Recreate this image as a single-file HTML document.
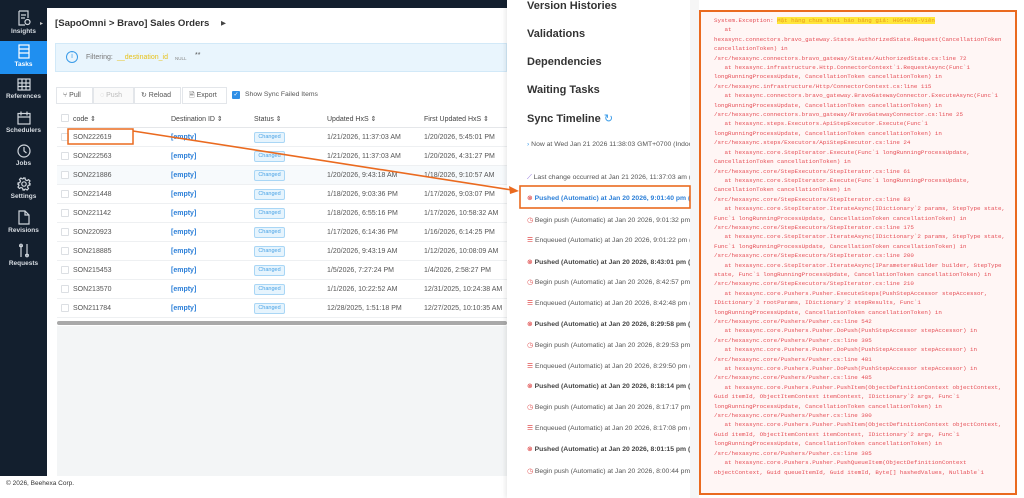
<!DOCTYPE html>
<html><head><meta charset="utf-8"><style>
*{margin:0;padding:0;box-sizing:border-box}
body{width:1024px;height:498px;overflow:hidden;position:relative;background:#fff;font-family:"Liberation Sans","DejaVu Sans",sans-serif;color:#333}
.abs{position:absolute}
#side{left:0;top:0;width:47px;height:476px;background:#131f2e}
.si{position:absolute;left:0;width:47px;text-align:center;color:#d8dde3;font-size:6.5px;font-weight:bold}
.si svg{display:block;margin:0 auto 2px}
#top{left:47px;top:0;width:460px;height:8px;background:#131f2e}
.t{position:absolute;white-space:nowrap}
.row{position:absolute;left:57px;width:450px;height:19px;border-bottom:1px solid #eef0f2;font-size:7px;color:#555}
.row span{position:absolute;top:6px;white-space:nowrap}
.cb{position:absolute;left:4px;top:5px;width:8px;height:8px;border:1px solid #dcdfe3;border-radius:1px;background:#fff}
.badge{position:absolute;left:197px;top:4px;width:31px;height:11px;background:#e6f4fd;border:1px solid #a9d6f5;border-radius:2px;color:#4aa3e6;font-size:5.5px;text-align:center;line-height:9px}
.btn{position:absolute;top:87px;height:17px;border:1px solid #e3e6ea;background:#fff;font-size:7px;color:#555;line-height:15px;padding-left:6px}
.tl{position:absolute;left:527px;font-size:6.8px;color:#555;white-space:nowrap;width:163px;overflow:hidden}
.h{position:absolute;left:527px;font-size:11px;font-weight:bold;color:#333}
#err{left:699px;top:10px;width:318px;height:485px;border:2px solid #ea6a1f;background:#fff6f5;overflow:hidden;padding:4px 0 0 13px;font-family:"Liberation Mono",monospace;font-size:5.85px;line-height:9.4px;color:#e54d55;white-space:pre}
</style></head><body>
<div id="side" class="abs">
 <div class="abs" style="left:40px;top:20px;color:#ccc;font-size:6px">▸</div>
 <div class="si" style="top:10px"><svg width="14" height="16" viewBox="0 0 14 16" fill="none" stroke="#cfd5dc" stroke-width="1.2"><path d="M2 1h9v7M2 1v14h6M4 5h5M4 8h4"/><circle cx="10.5" cy="12" r="2.5"/></svg>Insights</div>
 <div class="abs" style="left:0;top:41px;width:47px;height:33px;background:#1f8ff0"></div>
 <div class="si" style="top:44px;color:#fff"><svg width="12" height="15" viewBox="0 0 12 15" fill="none" stroke="#fff" stroke-width="1.2"><rect x="1" y="1" width="10" height="13"/><path d="M1 5h10M1 9h10"/></svg>Tasks</div>
 <div class="si" style="top:78px"><svg width="14" height="13" viewBox="0 0 14 13" fill="none" stroke="#cfd5dc" stroke-width="1.2"><rect x="1" y="1" width="12" height="11"/><path d="M1 5h12M1 8.5h12M5 1v11M9 1v11"/></svg>References</div>
 <div class="si" style="top:111px"><svg width="14" height="14" viewBox="0 0 14 14" fill="none" stroke="#cfd5dc" stroke-width="1.2"><rect x="1" y="2.5" width="12" height="10.5"/><path d="M1 6h12M4 0.5v4M10 0.5v4"/></svg>Schedulers</div>
 <div class="si" style="top:144px"><svg width="14" height="14" viewBox="0 0 14 14" fill="none" stroke="#cfd5dc" stroke-width="1.2"><circle cx="7" cy="7" r="6"/><path d="M7 3v4l2.5 2"/></svg>Jobs</div>
 <div class="si" style="top:177px"><svg width="14" height="14" viewBox="0 0 14 14" fill="none" stroke="#cfd5dc" stroke-width="1.2"><circle cx="7" cy="7" r="2.2"/><path d="M6 1h2l.4 1.8 1.6.8 1.6-1 1.4 1.4-1 1.6.7 1.6L13 6v2l-1.8.4-.7 1.6 1 1.6-1.4 1.4-1.6-1-1.6.7L8 13H6l-.4-1.8-1.6-.7-1.6 1-1.4-1.4 1-1.6-.7-1.6L1 8V6l1.8-.4.7-1.6-1-1.6 1.4-1.4 1.6 1 1.6-.8z"/></svg>Settings</div>
 <div class="si" style="top:210px"><svg width="12" height="15" viewBox="0 0 12 15" fill="none" stroke="#cfd5dc" stroke-width="1.2"><path d="M1 1h6l4 4v9H1z M7 1v4h4"/></svg>Revisions</div>
 <div class="si" style="top:243px"><svg width="12" height="15" viewBox="0 0 12 15" fill="none" stroke="#cfd5dc" stroke-width="1.2"><path d="M3 3v11M9 1v11M1 3h4M7 12h4"/><circle cx="3" cy="2.5" r="1.3"/><circle cx="9" cy="12.5" r="1.3"/></svg>Requests</div>
</div>
<div id="top" class="abs"></div>
<div class="t" style="left:55px;top:18px;font-size:9.6px;font-weight:bold;color:#333">[SapoOmni &gt; Bravo] Sales Orders</div>
<div class="t" style="left:221px;top:19px;font-size:6.5px;color:#444">▶</div>
<div class="abs" style="left:55px;top:43px;width:452px;height:29px;background:#e9f5fd;border:1px solid #d2e9f8"></div>
<div class="abs" style="left:66px;top:51px;width:12px;height:12px;border:1.3px solid #3a9be8;border-radius:50%;color:#3a9be8;font-size:7px;text-align:center;line-height:10px">i</div>
<div class="t" style="left:86px;top:54px;font-size:7px;color:#777">Filtering:</div>
<div class="t" style="left:117px;top:54px;font-size:7px;color:#e8c21c">__destination_id</div>
<div class="t" style="left:175px;top:56px;font-size:4.5px;color:#888">NULL</div>
<div class="t" style="left:195px;top:52px;font-size:7px;color:#555">**</div>
<div class="btn" style="left:56px;width:37px">⑂ Pull</div>
<div class="btn" style="left:93px;width:41px;color:#bbb;background:#fafafa">◌ Push</div>
<div class="btn" style="left:134px;width:47px">↻ Reload</div>
<div class="btn" style="left:182px;width:45px">🗎 Export</div>
<div class="abs" style="left:232px;top:91px;width:8px;height:8px;background:#2f8fe6;border-radius:1px;color:#fff;font-size:6px;line-height:8px;text-align:center">✓</div>
<div class="t" style="left:245px;top:91px;font-size:6.8px;color:#555">Show Sync Failed Items</div>
<div class="row" style="top:109px;border-bottom:1px solid #e5e7ea;color:#444"><div class="cb"></div><span style="left:16px;top:6px">code ⇕</span><span style="left:114px">Destination ID ⇕</span><span style="left:197px">Status ⇕</span><span style="left:270px">Updated HxS ⇕</span><span style="left:367px">First Updated HxS ⇕</span></div>
<div class="row" style="top:128px"><div class="cb"></div><span style="left:16px">SON222619</span><span style="left:114px;color:#2b7fd8;font-weight:bold">[empty]</span><div class="badge">Changed</div><span style="left:270px">1/21/2026, 11:37:03 AM</span><span style="left:367px">1/20/2026, 5:45:01 PM</span></div>
<div class="row" style="top:147px"><div class="cb"></div><span style="left:16px">SON222563</span><span style="left:114px;color:#2b7fd8;font-weight:bold">[empty]</span><div class="badge">Changed</div><span style="left:270px">1/21/2026, 11:37:03 AM</span><span style="left:367px">1/20/2026, 4:31:27 PM</span></div>
<div class="row" style="top:166px;background:#f7fafc"><div class="cb"></div><span style="left:16px">SON221886</span><span style="left:114px;color:#2b7fd8;font-weight:bold">[empty]</span><div class="badge">Changed</div><span style="left:270px">1/20/2026, 9:43:18 AM</span><span style="left:367px">1/18/2026, 9:10:57 AM</span></div>
<div class="row" style="top:185px"><div class="cb"></div><span style="left:16px">SON221448</span><span style="left:114px;color:#2b7fd8;font-weight:bold">[empty]</span><div class="badge">Changed</div><span style="left:270px">1/18/2026, 9:03:36 PM</span><span style="left:367px">1/17/2026, 9:03:07 PM</span></div>
<div class="row" style="top:204px"><div class="cb"></div><span style="left:16px">SON221142</span><span style="left:114px;color:#2b7fd8;font-weight:bold">[empty]</span><div class="badge">Changed</div><span style="left:270px">1/18/2026, 6:55:16 PM</span><span style="left:367px">1/17/2026, 10:58:32 AM</span></div>
<div class="row" style="top:223px"><div class="cb"></div><span style="left:16px">SON220923</span><span style="left:114px;color:#2b7fd8;font-weight:bold">[empty]</span><div class="badge">Changed</div><span style="left:270px">1/17/2026, 6:14:36 PM</span><span style="left:367px">1/16/2026, 6:14:25 PM</span></div>
<div class="row" style="top:242px"><div class="cb"></div><span style="left:16px">SON218885</span><span style="left:114px;color:#2b7fd8;font-weight:bold">[empty]</span><div class="badge">Changed</div><span style="left:270px">1/20/2026, 9:43:19 AM</span><span style="left:367px">1/12/2026, 10:08:09 AM</span></div>
<div class="row" style="top:261px"><div class="cb"></div><span style="left:16px">SON215453</span><span style="left:114px;color:#2b7fd8;font-weight:bold">[empty]</span><div class="badge">Changed</div><span style="left:270px">1/5/2026, 7:27:24 PM</span><span style="left:367px">1/4/2026, 2:58:27 PM</span></div>
<div class="row" style="top:280px"><div class="cb"></div><span style="left:16px">SON213570</span><span style="left:114px;color:#2b7fd8;font-weight:bold">[empty]</span><div class="badge">Changed</div><span style="left:270px">1/1/2026, 10:22:52 AM</span><span style="left:367px">12/31/2025, 10:24:38 AM</span></div>
<div class="row" style="top:299px"><div class="cb"></div><span style="left:16px">SON211784</span><span style="left:114px;color:#2b7fd8;font-weight:bold">[empty]</span><div class="badge">Changed</div><span style="left:270px">12/28/2025, 1:51:18 PM</span><span style="left:367px">12/27/2025, 10:10:35 AM</span></div>
<div class="abs" style="left:57px;top:321px;width:450px;height:4px;background:#a9a9a9;border-radius:2px"></div>
<div class="abs" style="left:57px;top:326px;width:450px;height:150px;background:#f3f5f6"></div>
<div class="t" style="left:6px;top:480px;font-size:6.5px;color:#333">© 2026, Beehexa Corp.</div>
<div class="abs" style="left:507px;top:0;width:183px;height:498px;background:#fff;box-shadow:-2px 0 4px rgba(0,0,0,.08)"></div>
<div class="abs" style="left:690px;top:0;width:9px;height:498px;background:#f6f6f6"></div>
<div class="h" style="top:0px">Version Histories</div>
<div class="h" style="top:28px">Validations</div>
<div class="h" style="top:56px">Dependencies</div>
<div class="h" style="top:84px">Waiting Tasks</div>
<div class="h" style="top:112px">Sync Timeline <span style="color:#3a9be8;font-weight:normal">↻</span></div>
<div class="tl" style="top:141px"><span style="color:#3a9be8">›</span> Now at Wed Jan 21 2026 11:38:03 GMT+0700 (Indochina)</div>
<div class="tl" style="top:174px"><span style="color:#7a5ad8">⟋</span> Last change occurred at Jan 21 2026, 11:37:03 am (</div>
<div class="tl" style="top:194px;color:#2b7fd8;font-weight:bold"><span style="color:#e05050">⊗</span> Pushed (Automatic) at Jan 20 2026, 9:01:40 pm (1</div>
<div class="tl" style="top:216px"><span style="color:#e05050">◷</span> Begin push (Automatic) at Jan 20 2026, 9:01:32 pm</div>
<div class="tl" style="top:236px"><span style="color:#e05050">☰</span> Enqueued (Automatic) at Jan 20 2026, 9:01:22 pm (</div>
<div class="tl" style="top:258px;font-weight:bold;color:#444"><span style="color:#e05050">⊗</span> Pushed (Automatic) at Jan 20 2026, 8:43:01 pm (1</div>
<div class="tl" style="top:278px"><span style="color:#e05050">◷</span> Begin push (Automatic) at Jan 20 2026, 8:42:57 pm</div>
<div class="tl" style="top:299px"><span style="color:#e05050">☰</span> Enqueued (Automatic) at Jan 20 2026, 8:42:48 pm (</div>
<div class="tl" style="top:320px;font-weight:bold;color:#444"><span style="color:#e05050">⊗</span> Pushed (Automatic) at Jan 20 2026, 8:29:58 pm (1</div>
<div class="tl" style="top:341px"><span style="color:#e05050">◷</span> Begin push (Automatic) at Jan 20 2026, 8:29:53 pm</div>
<div class="tl" style="top:362px"><span style="color:#e05050">☰</span> Enqueued (Automatic) at Jan 20 2026, 8:29:50 pm (</div>
<div class="tl" style="top:382px;font-weight:bold;color:#444"><span style="color:#e05050">⊗</span> Pushed (Automatic) at Jan 20 2026, 8:18:14 pm (1</div>
<div class="tl" style="top:403px"><span style="color:#e05050">◷</span> Begin push (Automatic) at Jan 20 2026, 8:17:17 pm</div>
<div class="tl" style="top:424px"><span style="color:#e05050">☰</span> Enqueued (Automatic) at Jan 20 2026, 8:17:08 pm (</div>
<div class="tl" style="top:445px;font-weight:bold;color:#444"><span style="color:#e05050">⊗</span> Pushed (Automatic) at Jan 20 2026, 8:01:15 pm (1</div>
<div class="tl" style="top:467px"><span style="color:#e05050">◷</span> Begin push (Automatic) at Jan 20 2026, 8:00:44 pm</div>
<div id="err" class="abs">System.Exception: <span style="background:#ffe63b;color:#e89a1a">Mặt hàng chưa khai báo bảng giá: H054076-Viên</span>
   at
hexasync.connectors.bravo_gateway.States.AuthorizedState.Request(CancellationToken
cancellationToken) in
/src/hexasync.connectors.bravo_gateway/States/AuthorizedState.cs:line 72
   at hexasync.infrastructure.Http.ConnectorContext`1.RequestAsync(Func`1
longRunningProcessUpdate, CancellationToken cancellationToken) in
/src/hexasync.infrastructure/Http/ConnectorContext.cs:line 115
   at hexasync.connectors.bravo_gateway.BravoGatewayConnector.ExecuteAsync(Func`1
longRunningProcessUpdate, CancellationToken cancellationToken) in
/src/hexasync.connectors.bravo_gateway/BravoGatewayConnector.cs:line 25
   at hexasync.steps.Executors.ApiStepExecutor.Execute(Func`1
longRunningProcessUpdate, CancellationToken cancellationToken) in
/src/hexasync.steps/Executors/ApiStepExecutor.cs:line 24
   at hexasync.core.StepIterator.Execute(Func`1 longRunningProcessUpdate,
CancellationToken cancellationToken) in
/src/hexasync.core/StepExecutors/StepIterator.cs:line 61
   at hexasync.core.StepIterator.Execute(Func`1 longRunningProcessUpdate,
CancellationToken cancellationToken) in
/src/hexasync.core/StepExecutors/StepIterator.cs:line 83
   at hexasync.core.StepIterator.IterateAsync(IDictionary`2 params, StepType state,
Func`1 longRunningProcessUpdate, CancellationToken cancellationToken) in
/src/hexasync.core/StepExecutors/StepIterator.cs:line 175
   at hexasync.core.StepIterator.IterateAsync(IDictionary`2 params, StepType state,
Func`1 longRunningProcessUpdate, CancellationToken cancellationToken) in
/src/hexasync.core/StepExecutors/StepIterator.cs:line 200
   at hexasync.core.StepIterator.IterateAsync(IParametersBuilder builder, StepType
state, Func`1 longRunningProcessUpdate, CancellationToken cancellationToken) in
/src/hexasync.core/StepExecutors/StepIterator.cs:line 210
   at hexasync.core.Pushers.Pusher.ExecuteSteps(PushStepAccessor stepAccessor,
IDictionary`2 rootParams, IDictionary`2 stepResults, Func`1
longRunningProcessUpdate, CancellationToken cancellationToken) in
/src/hexasync.core/Pushers/Pusher.cs:line 542
   at hexasync.core.Pushers.Pusher.DoPush(PushStepAccessor stepAccessor) in
/src/hexasync.core/Pushers/Pusher.cs:line 395
   at hexasync.core.Pushers.Pusher.DoPush(PushStepAccessor stepAccessor) in
/src/hexasync.core/Pushers/Pusher.cs:line 481
   at hexasync.core.Pushers.Pusher.DoPush(PushStepAccessor stepAccessor) in
/src/hexasync.core/Pushers/Pusher.cs:line 485
   at hexasync.core.Pushers.Pusher.PushItem(ObjectDefinitionContext objectContext,
Guid itemId, ObjectItemContext itemContext, IDictionary`2 args, Func`1
longRunningProcessUpdate, CancellationToken cancellationToken) in
/src/hexasync.core/Pushers/Pusher.cs:line 300
   at hexasync.core.Pushers.Pusher.PushItem(ObjectDefinitionContext objectContext,
Guid itemId, ObjectItemContext itemContext, IDictionary`2 args, Func`1
longRunningProcessUpdate, CancellationToken cancellationToken) in
/src/hexasync.core/Pushers/Pusher.cs:line 305
   at hexasync.core.Pushers.Pusher.PushQueueItem(ObjectDefinitionContext
objectContext, Guid queueItemId, Guid itemId, Byte[] hashedValues, Nullable`1</div>
<svg class="abs" style="left:0;top:0" width="1024" height="498">
 <rect x="68" y="129" width="65" height="15" fill="none" stroke="#ea6a1f" stroke-width="1.5"/>
 <rect x="520" y="186" width="170" height="22" fill="none" stroke="#ea6a1f" stroke-width="1.6"/>
 <line x1="133" y1="131" x2="512" y2="190" stroke="#ea6a1f" stroke-width="1.6"/>
 <path d="M519 191 L509 186 L510 194 Z" fill="#ea6a1f"/>
</svg>
</body></html>
